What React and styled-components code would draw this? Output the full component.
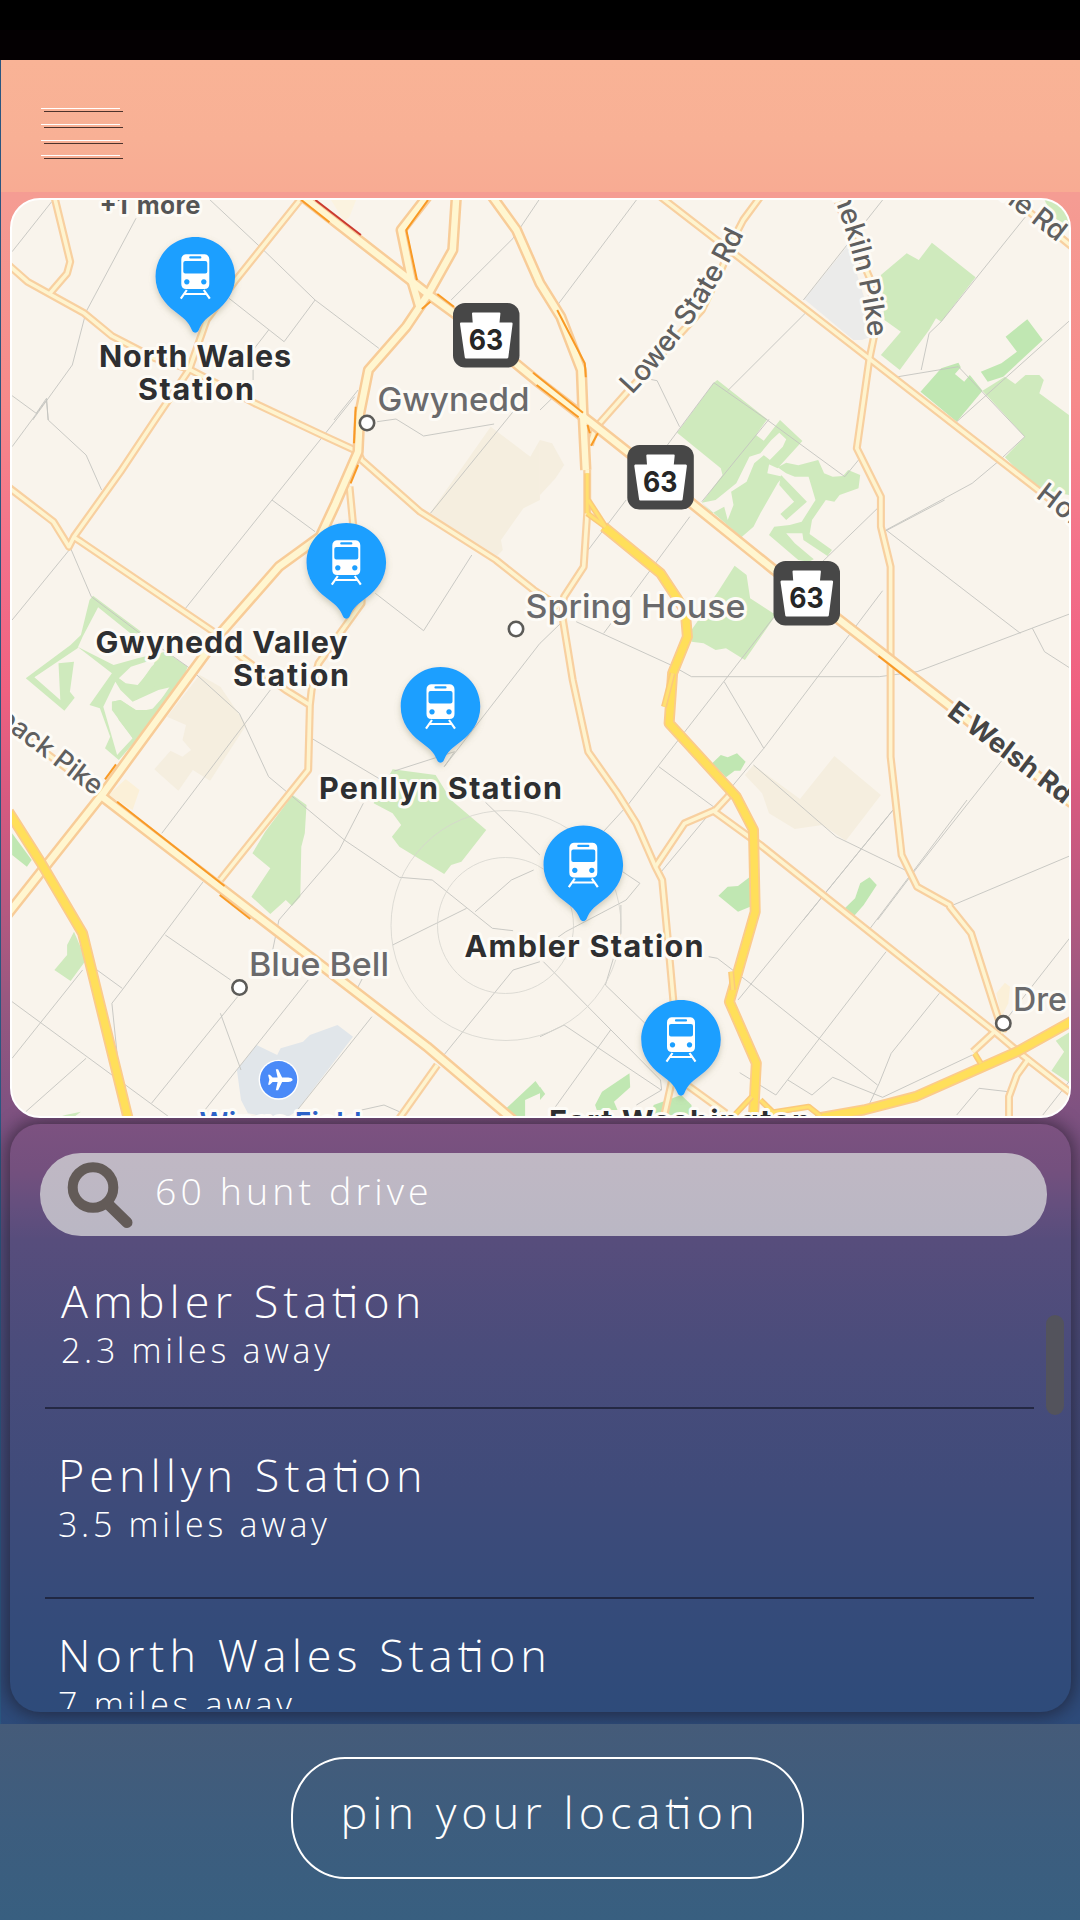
import React from "react";
import styled, { createGlobalStyle } from "styled-components";

const GlobalStyle = createGlobalStyle`
  * { box-sizing: border-box; }
  body { margin: 0; font-family: "Open Sans", "Lato", sans-serif; }
`;

/* ---------- layout ---------- */

const Page = styled.div`
  display: flex;
  flex-direction: column;
  width: 1080px;
  height: 1920px;
  overflow: hidden;
  background: linear-gradient(
    180deg,
    #f6a293 0,
    #f59c93 198px,
    #f68a8a 400px,
    #f3708a 560px,
    #ef6180 690px,
    #d65a80 800px,
    #b85980 900px,
    #985880 1000px,
    #7f5281 1110px,
    #74507e 1170px,
    #654f7e 1205px,
    #574d7c 1240px,
    #4a4c7b 1350px,
    #3f4b7a 1490px,
    #344b7a 1620px,
    #2e4b7a 1712px,
    #26517c 1920px
  );
`;

const StatusBar = styled.div`
  height: 60px;
  flex: none;
  background: linear-gradient(180deg, #000 30px, #040002 30px);
`;

const Body = styled.div`
  display: flex;
  flex-direction: column;
  flex: 1;
  border-left: 1px solid #2a5680;
`;

const Header = styled.header`
  display: flex;
  height: 132px;
  flex: none;
  padding: 48px 0 0 40px;
  background: linear-gradient(180deg, #f9b396, #f8b095 60%, #f8ab93);
`;

const MenuButton = styled.button`
  display: grid;
  grid-template-rows: 16px 16px 15px 1px;
  width: 79px;
  height: 48px;
  padding: 0;
  border: 0;
  background: none;
`;

const MenuLine = styled.span`
  height: 1px;
  background: #fff;
  box-shadow: 3px 3px 0 rgba(20, 10, 10, 0.75);
`;

const MapCard = styled.section`
  position: relative;
  z-index: 1;
  width: 1061px;
  height: 920px;
  flex: none;
  margin: 6px 0 6px 9px;
  border: 2px solid #fff;
  border-radius: 30px;
  overflow: hidden;
  background: #f9f4ec;
`;

const MapSvg = styled.svg`
  display: block;
  width: 1057px;
  height: 916px;
  font-family: "Inter", "Roboto", sans-serif;
`;

const Panel = styled.section`
  display: flex;
  flex-direction: column;
  width: 1061px;
  height: 588px;
  flex: none;
  margin-left: 9px;
  padding: 29px 0 3px;
  border-radius: 30px;
  box-shadow: 0 0 18px 3px rgba(25, 20, 30, 0.6);
`;

const SearchBar = styled.label`
  display: flex;
  align-items: center;
  width: 1007px;
  height: 83px;
  flex: none;
  margin-left: 30px;
  padding-left: 27px;
  border-radius: 41px;
  background: linear-gradient(180deg, #c0b8c4, #bab7c4);
`;

const SearchIcon = styled.svg`
  width: 68px;
  height: 68px;
  flex: none;
`;

const SearchText = styled.span`
  margin: -7px 0 0 20px;
  font-weight: 300;
  font-size: 37.500px;
  line-height: 46px;
  letter-spacing: 4.1px;
  color: #fff;
  white-space: pre;
`;

const Results = styled.div`
  display: flex;
  flex: 1;
  min-height: 0;
  overflow: hidden;
`;

const List = styled.ul`
  width: 1024px;
  margin: 0;
  padding: 0 0 0 35px;
  list-style: none;
`;

const Row = styled.li`
  height: ${(p) => p.$height}px;
  padding: ${(p) => p.$top}px 0 0 ${(p) => p.$left}px;
  border-bottom: 2px solid rgba(25, 28, 50, 0.75);
  color: #fff;
  font-weight: 300;
  white-space: pre;
`;

const Title = styled.div`
  font-size: 45px;
  line-height: 46px;
  letter-spacing: ${(p) => p.$spacing}px;
`;

const Distance = styled.div`
  margin-top: 6px;
  font-size: 34px;
  line-height: 40px;
  letter-spacing: ${(p) => p.$spacing}px;
`;

const ScrollThumb = styled.div`
  width: 18px;
  height: 100px;
  margin: 79px 0 0 12px;
  border-radius: 9px;
  background: #53535c;
`;

const Footer = styled.footer`
  display: flex;
  justify-content: flex-start;
  align-items: flex-start;
  flex: 1;
  margin: 12px 0 0 -1px;
  padding: 33px 0 0 291px;
  background: linear-gradient(180deg, #455b79, #3d5d7e 50%, #385f80);
`;

const PinButton = styled.button`
  width: 513px;
  height: 122px;
  padding: 0 0 12px 5px;
  border: 2px solid #fff;
  border-radius: 54px / 58px;
  background: none;
  color: #fff;
  font-family: inherit;
  font-weight: 300;
  font-size: 45px;
  line-height: 54px;
  letter-spacing: ${(p) => p.$spacing}px;
  white-space: pre;
`;

const JoinedT = styled.span`
  position: relative;
  letter-spacing: 1px;
  &::after {
    content: "";
    position: absolute;
    left: 0.2em;
    top: 0.54em;
    width: 0.26em;
    height: 2.5px;
    background: #fff;
  }
`;

/* Joins each "t" to the "i" after it, as a ti ligature. */
function Ligated({ children }) {
  const parts = children.split("ti");
  return parts.map((part, i) => (
    <React.Fragment key={i}>
      {i > 0 && (
        <>
          <JoinedT>t</JoinedT>i
        </>
      )}
      {part}
    </React.Fragment>
  ));
}

/* ---------- map data ---------- */

/* The map is surveyed in six overlapping sheets; a capital letter in a
   line switches to that sheet, and all sheets share one scale. */
const SHEETS = {
  A: [0, 0],
  B: [540, 180],
  C: [0, 400],
  D: [540, 500],
  E: [0, 740],
  F: [540, 800],
};

function points(text) {
  let origin = SHEETS.A;
  const out = [];
  for (const token of text.split(" ")) {
    if (SHEETS[token]) origin = SHEETS[token];
    else {
      const [x, y] = token.split(",").map(Number);
      out.push(`${(origin[0] + x / 2.904).toFixed(1)},${(origin[1] + y / 3).toFixed(1)}`);
    }
  }
  return out.join(" ");
}

const AREAS = [
  ["#cfeabd", "B 990,285 1065,220 1100,240 1138,188 1265,292 1165,425 1150,415 1130,450 1045,570 990,525 1048,455 1000,420"],
  ["#ebebea", "B 895,195 955,400 960,470 935,480 910,480 768,358"],
  ["#c0e7b2", "B 1352,470 1415,418 1460,480 1345,590 1300,605 1280,575 1340,550 1385,515"],
  ["#cfeabd", "B 1285,632 1350,590 1380,612 1410,585 1450,585 1463,600 1450,640 1536,705 1536,945 1440,925 1350,832 1408,770"],
  ["#c0e7b2", "B 1105,635 1165,565 1215,548 1222,562 1205,582 1232,605 1248,585 1285,632 1210,725"],
  ["#cfeabd", "B 1465,60 1540,60 1540,145 1490,110"],
  ["#cfeabd", "B 398,758 505,608 515,600 660,718 627,765 650,782 697,720 762,783 690,865 658,850 705,800 715,778 695,758 672,780 640,820 608,830 570,910 510,960 470,968 530,885 525,865"],
  ["#cfeabd", "B 470,968 500,1000 535,980 545,1020 562,975 555,935 600,905 622,850 650,826 668,840 660,880 705,890 690,910 640,1000 620,1040 585,1072"],
  ["#cfeabd", "B 690,862 715,848 750,856 808,840 825,880 850,890 880,888 895,870 930,885 925,925 870,945 855,965 830,960 790,1020 783,1062 848,1110 835,1128 765,1080 762,1060 715,1060 740,1090 795,1138 780,1145 750,1140 665,1065 680,1040 725,1035 760,1025 800,960 780,890 740,890 715,880"],
  ["#cfeabd", "B 700,885 775,965 715,1020 698,1002 738,965 695,915"],
  ["#cfeabd", "D 565,197 600,225 610,295 685,345 595,480 540,445 510,450 475,430 440,425 440,390 520,270"],
  ["#c0e7b2", "D 500,790 525,765 545,772 572,760 597,785 582,812 565,812 540,832"],
  ["#c0e7b2", "D 518,1187 545,1160 575,1158 610,1130 610,1220 575,1235"],
  ["#c0e7b2", "D 885,1225 915,1195 930,1150 957,1132 978,1155 940,1215 910,1250"],
  ["#cfeabd", "C 75,835 205,735 235,705 260,600 270,587 410,695 385,705 285,622 240,710 225,745 100,832 175,900 170,790 215,785 203,875 217,893 187,932"],
  ["#cfeabd", "C 225,740 330,795 400,775 480,755 545,800 530,840 430,980 345,1080 305,1045 320,1010 290,925 260,915 325,820"],
  ["#f9f4ec", "C 345,835 380,865 400,860 440,800 470,770 380,800"],
  ["#f9f4ec", "C 335,845 300,920 340,1065 385,1015 325,930 325,905 350,900 395,930 440,930 500,860 460,870 385,905 350,870"],
  ["#cfeabd", "C 325,905 350,900 400,935 450,925 500,850 520,860 390,1020 345,960"],
  ["#cfeabd", "C 345,835 395,900 450,860 485,770 455,765 445,800 400,855 365,850"],
  ["#cfeabd", "E 850,165 890,195 885,280 875,320 872,470 848,498 830,480 785,522 730,470 785,385 733,340 770,275"],
  ["#cfeabd", "E 1085,190 1140,88 1265,105 1310,180 1412,270 1340,365 1310,375 1290,402 1160,320 1138,290 1165,255 1140,220"],
  ["#c0e7b2", "E 35,280 92,360 78,380 35,345"],
  ["#cfeabd", "E 215,575 250,660 205,723 158,690 195,645 195,615"],
  ["#c0e7b2", "E 1465,1110 1555,1023 1570,1045 1568,1060 1525,1080 1525,1130 1480,1130"],
  ["#cfeabd", "E 165,1133 190,1125 235,1115 210,1135"],
  ["#c0e7b2", "F 160,915 180,875 260,820 262,862 215,905 225,930 165,930"],
  ["#c0e7b2", "F 330,915 410,885 440,915 440,945 325,945"],
  ["#cfeabd", "F 1498,722 1540,695 1540,850 1485,812 1522,755"],
  ["#c0e7b2", "F 0,860 15,882 0,900"],
  ["#f5eedf", "C 1425,80 1540,170 1568,120 1568,300 1520,325 1455,420 1460,450 1440,472 1245,345"],
  ["#f5eedf", "B 0,780 35,790 70,855 45,895 0,945"],
  ["#f5eedf", "C 580,825 640,860 715,975 610,1142 560,1110 518,1172 448,1108 495,1052 530,1070 555,1050 530,1020 540,975 485,950"],
  ["#fbf0d8", "C 365,1137 405,1170 385,1230 315,1185"],
  ["#f5eedf", "D 595,825 620,795 755,897 855,768 990,885 888,1022 820,975 740,987 665,940 645,880"],
  ["#fbf0d8", "F 1325,580 1350,548 1365,560 1360,610 1340,650"],
  ["#fbf3e0", "A 960,598 1035,598 1015,650 1000,665"],
  ["#e1e6ea", "E 688,990 745,915 805,945 815,925 880,905 900,885 980,855 1025,890 860,1115 820,1140 720,1120 700,1080"],
];

const LANES = [
  "A 35,755 150,605",
  "A 395,655 250,935 210,1095 95,1260",
  "A 600,590 770,755 915,900 1100,1045",
  "A 665,895 825,1025 915,900",
  "A 780,990 735,1050 C 735,-60",
  "A 1310,900 1490,715 1565,600",
  "A 35,1187 105,1240 135,1195 140,1260",
  "A 1040,1170 970,1260",
  "C 35,140 135,0 140,60 250,165 295,270",
  "C 35,660 205,445 265,590 400,695 545,800 695,940 780,1130 1000,1320 1160,1432 1255,1440 1430,1585 1490,1592",
  "C 1030,-10 790,300 535,630",
  "C 790,300 915,395",
  "C 1090,580 1230,692 1370,465",
  "C 1095,65 1150,57 1230,108 1435,72",
  "C 1490,35 1250,340",
  "C 1568,730 1290,1100 1320,1055 1145,1113",
  "C 905,1015 1140,1160",
  "C 785,870 470,1300",
  "B 280,60 40,390",
  "B 0,690 50,640",
  "B 995,60 765,360",
  "B 770,400 545,632",
  "B 1410,110 1165,425 1130,460 1107,570",
  "B 1040,590 1215,560 1408,770 1330,845 1255,910 1005,1050 1395,1360",
  "B 1540,420 1210,725",
  "B 320,598 340,602 405,740",
  "B 370,795 505,608 660,720 885,890 925,840",
  "B 665,718 470,965",
  "B 250,960 140,1110",
  "B 435,1010 185,1360",
  "B 980,985 820,1145",
  "D 105,365 380,495 440,530 985,530 1095,515 1540,341",
  "D 680,350 255,915 100,1090",
  "D 535,545 650,745",
  "D 995,272 650,745 340,1130",
  "D 1175,0 1005,92",
  "D 1430,385 1465,455 1540,505",
  "D 1350,770 1090,1110 980,1260",
  "D 345,800 510,925",
  "D 620,795 860,1010 1060,1110",
  "D 1025,930 765,1260",
  "D 1200,1215 1540,1067",
  "D 0,430 60,370",
  "E 1055,190 985,330 810,540 790,640",
  "E 1380,515 1485,420 1550,390",
  "E 1140,615 1355,505",
  "E 1410,187 1568,345",
  "E 590,425 355,750 325,790 350,1040",
  "E 480,585 670,720",
  "E 690,770 440,1090",
  "E 640,820 700,990",
  "E 895,720 595,1110",
  "E 35,785 490,1130",
  "E 35,955 240,690",
  "E 250,955 75,1115",
  "E 275,685 355,745",
  "E 1080,830 860,1115",
  "E 1035,750 1055,710",
  "E 1285,950 1490,690 1568,665",
  "E 1050,1110 1115,1095 1160,1115",
  "F 240,215 290,250 250,300 75,395 0,450",
  "F 10,485 350,840 353,870 280,915",
  "F 490,470 515,475 610,550 980,855",
  "F 235,315 235,400 190,555 340,705 420,800",
  "F 205,690 45,920",
  "F 0,710 70,675 352,870",
  "F 1025,30 575,600",
  "F 1240,0 955,390",
  "F 1005,455 685,885 580,818",
  "F 1160,580 1020,760 985,850 955,915",
  "F 720,840 790,885 850,832 995,892 1255,765",
  "F 1540,412 1360,650",
  "F 1210,945 1275,865 1360,875",
  "F 1540,840 1460,945",
];

/* fill, casing, fill width, casing width */
const ROAD = {
  small: ["#fef4cf", "#f8d0a0", 3.6, 8],
  main: ["#fff6d0", "#f8cc98", 6.4, 11.4],
  high: ["#ffdf5a", "#fbcb8c", 7.4, 11],
  thin: ["#ffe070", "#fbc97c", 3, 6],
};

const ROADS = [
  ["small", "A 158,590 204,785 195,820 145,880"],
  ["small", "A 25,795 80,845 245,940 325,1008 450,1075 550,1108 740,1210 C 935,105 1040,155 1050,180 1220,335 1440,480 1550,570 D 55,320"],
  ["small", "A 875,595 685,840 600,960 550,1108 450,1260 C 350,215 215,410 200,440 155,365 25,262"],
  ["small", "C 212,410 235,425 620,695 700,770 830,870 900,915"],
  ["small", "C 1015,260 1025,370 1050,560 1050,610 925,790 905,870 900,915 895,1110 E 640,420"],
  ["small", "B 640,50 590,120 560,180 530,260 470,390 390,480 250,640 160,745 145,795"],
  ["small", "B 350,50 525,190 955,535 1440,925 1545,1010"],
  ["small", "B 855,40 900,160 960,300 972,460 957,535 920,805 990,950 990,1040 1018,1160 D 1018,205 1018,770 1050,1065 1095,1160 1190,1215 F 1190,320 1252,400 1320,620 1345,700"],
  ["small", "B 1380,60 1420,95 1545,200"],
  ["small", "B 137,870 137,1000 127,1160 70,1250 D 65,350 95,540 140,755 225,880 280,970 335,1100 355,1140 F 375,460 387,600 388,820 360,950"],
  ["small", "D 555,880 510,930 420,970 335,1100"],
  ["small", "F 500,30 640,135 1320,695 1400,765 1545,882"],
  ["small", "F 1320,695 1257,755"],
  ["small", "F 1420,775 1385,825 1362,890 1362,950"],
  ["small", "F 420,850 540,940"],
  ["small", "C 25,975 290,1180"],
  ["small", "E 1270,975 1160,1135"],
  ["main", "A 1325,590 1315,750 1245,880 1180,980 1070,1110 1045,1240 C 1040,155 975,310 930,410 810,500 640,700 470,940 300,1180 E 20,525"],
  ["main", "A 1240,590 1165,690 1195,840 1218,920"],
  ["main", "A 880,590 1240,880 1320,940 1568,1150 B 150,730 260,820 440,970 680,1170 D 870,360 1180,610 1545,910"],
  ["main", "A 1430,590 1500,690 1568,850 B 60,410 120,570 125,700 133,870"],
  ["main", "E 290,165 1240,920 1490,1140"],
  ["thin", "B 137,880 137,1000"],
  ["thin", "B 140,960 190,1040"],
  ["thin", "B 137,1000 190,1040"],
  ["thin", "D 385,520 360,620"],
  ["thin", "F 1262,760 1280,790"],
  ["thin", "F 555,515 560,570"],
  ["thin", "F 660,940 780,920 815,948"],
  ["thin", "F 615,890 565,945"],
  ["thin", "F 640,900 690,950"],
  ["high", "D 185,80 350,220 395,290 422,335 428,410 385,520 375,670 570,890 620,990 F 625,335 550,605 628,790 620,950"],
  ["high", "F 800,955 940,930 1090,890 1385,755 1545,663"],
  ["high", "E 25,215 120,370 240,580 372,1135"],
];

const TRAFFIC = [
  ["#f99a25", "A 875,600 957,667"],
  ["#cb3b30", "A 916,600 1048,705"],
  ["#f99a25", "A 1243,600 1180,690 1211,840"],
  ["#f99a25", "A 1225,927 1250,905"],
  ["#f99a25", "A 1270,882 1318,920"],
  ["#f99a25", "B 50,390 130,550 133,592"],
  ["#f99a25", "B -20,578 125,698"],
  ["#f99a25", "B -10,615 112,712"],
  ["#f99a25", "B 138,735 145,760"],
  ["#f99a25", "B 168,760 148,797"],
  ["#f99a25", "C 1033,20 1028,130"],
  ["#f99a25", "C 1040,195 1018,250"],
  ["#f99a25", "E 305,118 337,73"],
  ["#f99a25", "E 340,185 652,438"],
  ["#f99a25", "E 638,465 727,537"],
  ["#f99a25", "D 983,468 1075,542"],
];

/* x, y of the baseline, width, size, text */
const STATION_LABELS = [
  [99, 366.5, 192, 30.5, "North Wales"],
  [138, 399.5, 116, 30.5, "Station"],
  [95.5, 653.3, 252, 30.5, "Gwynedd Valley"],
  [233, 686, 116, 30.5, "Station"],
  [319, 798.5, 243, 30.5, "Penllyn Station"],
  [464.5, 957.3, 239, 30.5, "Ambler Station"],
  [549, 1131.5, 262, 30.5, "Fort Washington"],
];

const TOWN_LABELS = [
  [377.5, 411, 152, 33, "Gwynedd"],
  [525.5, 617.5, 220, 33, "Spring House"],
  [249, 976, 140, 33, "Blue Bell"],
  [1013, 1011, 54, 33, "Dre"],
];

const TOWN_DOTS = [[367, 423], [516, 629], [239.5, 987.5], [1003.3, 1023.3]];
const SHIELDS = [[453, 303], [627.3, 445], [773.5, 561]];
const PINS = [[195.3, 237], [346.3, 523], [440.5, 667], [583.3, 825.5], [681, 1000]];

const ROAD_LABELS = [
  ["lower-state", "M632,395 Q702,322 746,230", "Lower State Rd", 28, 197],
  ["limekiln", "M833,195 Q859,262 868.5,338", "nekiln Pike", 28, 147],
  ["top-right", "M999,197 L1090,268", "ne Rd", 28, 74],
  ["horsham", "M1035,497 L1150,585", "Horsham", 28, 126],
  ["skippack", "M-4,721 L101,801", "pack Pike", 27, 124],
];

const Label = styled.text`
  paint-order: stroke;
  stroke: #fdfbf6;
  stroke-width: 6px;
  stroke-linejoin: round;
  fill: ${(p) => p.$color};
  font-weight: ${(p) => p.$weight};
`;

function Shield({ x, y }) {
  return (
    <g transform={`translate(${x} ${y})`}>
      <rect width="66.5" height="64.5" rx="12" fill="#474747" />
      <path
        d="M20,9.5H46.500Q47.500,9.500 47.400,10.500L46.500,19.500H58.500Q59.800,19.500 59.600,21L55.300,54.500Q55,55.500 54,55.500H13Q12,55.500 11.800,54.500L7,21Q6.900,19.500 8,19.500H19.700L19,10.500Q19,9.500 20,9.500Z"
        fill="#fff"
      />
      <text x="33" y="46.500" fontSize="28.500" fontWeight="650" fill="#262626" textAnchor="middle" textLength="34.500" lengthAdjust="spacingAndGlyphs">
        63
      </text>
    </g>
  );
}

function StationPin({ x, y }) {
  return (
    <g transform={`translate(${x} ${y})`}>
      <path
        d="M0,0C22,0 39.800,17.500 39.800,39.500C39.800,56 30,67 21,74C12,81 7,84 3.500,93C2,96.500 -2,96.500 -3.500,93C-7,84 -12,81 -21,74C-30,67 -39.800,56 -39.800,39.500C-39.800,17.500 -22,0 0,0Z"
        fill="#1f9fff"
        filter="url(#pin-shadow)"
      />
      <path
        fill="#fff"
        fillRule="evenodd"
        d="M-9.500,17.300H9.500Q14,18 14,22.500V47Q14,52 9,52H-9Q-14,52 -14,47V22.500Q-14,18 -9.500,17.300ZM-5,19.300A1,1 0 0 0 -5,21.500H5A1,1 0 0 0 5,19.300ZM-10,24Q-12,24 -12,26V34.500Q-12,36.500 -10,36.500H10Q12,36.500 12,34.500V26Q12,24 10,24ZM-8.500,42.200a2.700,2.700 0 1 0 .01,0ZM8.500,42.200a2.700,2.700 0 1 0 .01,0Z"
      />
      <path d="M-8.500,53L-14.500,61.700M8.500,53L14.500,61.700M-10.500,57H10.500" stroke="#fff" strokeWidth="2.200" fill="none" />
    </g>
  );
}

function TransitMap() {
  return (
    <MapSvg viewBox="12 200 1057 916">
      <defs>
        <filter id="pin-shadow" x="-30%" y="-30%" width="160%" height="160%">
          <feDropShadow dx="0" dy="3" stdDeviation="3" floodColor="#886" floodOpacity="0.4" />
        </filter>
        {ROAD_LABELS.map(([id, d]) => (
          <path key={id} id={id} d={d} />
        ))}
      </defs>
      {AREAS.map(([fill, line], i) => (
        <polygon key={i} points={points(line)} fill={fill} />
      ))}
      <g fill="none" stroke="#c4c4c0" strokeWidth="0.9">
        {LANES.map((line) => (
          <polyline key={line} points={points(line)} />
        ))}
        <g stroke="#d6d4ce" strokeWidth="0.8">
          <circle cx="506" cy="925.500" r="115" />
          <circle cx="505.500" cy="925.500" r="68" />
        </g>
      </g>
      {Object.keys(ROAD).map((kind) => {
        const [fill, casing, inner, outer] = ROAD[kind];
        const lines = ROADS.filter(([k]) => k === kind).map(([, line]) => points(line));
        return (
          <g key={kind} fill="none" strokeLinejoin="round">
            {lines.map((p, i) => (
              <polyline key={`c${i}`} points={p} stroke={casing} strokeWidth={outer} />
            ))}
            {lines.map((p, i) => (
              <polyline key={`f${i}`} points={p} stroke={fill} strokeWidth={inner} />
            ))}
          </g>
        );
      })}
      {TRAFFIC.map(([color, line]) => (
        <polyline key={line} points={points(line)} fill="none" stroke={color} strokeWidth="2" />
      ))}

      {TOWN_DOTS.map(([x, y]) => (
        <circle key={x} cx={x} cy={y} r="7.200" fill="#fff" stroke="#5c5b58" strokeWidth="2.600" />
      ))}

      {ROAD_LABELS.map(([id, , text, size, length]) => (
        <Label key={id} $color="#5f5f5f" $weight={500} fontSize={size}>
          <textPath href={`#${id}`} textLength={length}>
            {text}
          </textPath>
        </Label>
      ))}
      <Label $color="#454545" $weight={650} fontSize="27" transform="translate(946 715) rotate(37.300)" textLength="148" lengthAdjust="spacingAndGlyphs">
        E Welsh Rd
      </Label>

      {TOWN_LABELS.map(([x, y, width, size, text]) => (
        <Label key={text} $color="#6a6a6c" $weight={550} x={x} y={y} fontSize={size} textLength={width} lengthAdjust="spacingAndGlyphs">
          {text}
        </Label>
      ))}
      <Label $color="#555" $weight={650} x="99.500" y="214" fontSize="25.500" wordSpacing="3" textLength="101">
        +1 more
      </Label>
      <Label $color="#2b62c8" $weight={600} x="199.500" y="1132.500" fontSize="28.500" textLength="162">
        Wings Field
      </Label>

      <circle cx="278.600" cy="1079.700" r="20" fill="#fff" />
      <circle cx="278.600" cy="1079.700" r="18.600" fill="#4a8af8" />
      <path
        transform="translate(278.600 1079.700)"
        fill="#fff"
        d="M14,0C14,1.500 11,2.200 9,2.200H3.500L-.5,10.500H-2.800L-1,2.200H-6L-8.800,5H-10.500L-9.300,0L-10.500,-5H-8.800L-6,-2.200H-1L-2.800,-10.500H-.5L3.500,-2.200H9C11,-2.200 14,-1.500 14,0Z"
      />

      {SHIELDS.map(([x, y]) => (
        <Shield key={x} x={x} y={y} />
      ))}
      {STATION_LABELS.map(([x, y, width, size, text], i) => (
        <Label key={i} $color="#2e2f31" $weight={650} x={x} y={y} fontSize={size} textLength={width}>
          {text}
        </Label>
      ))}
      {PINS.map(([x, y]) => (
        <StationPin key={x} x={x} y={y} />
      ))}
    </MapSvg>
  );
}

/* ---------- page ---------- */

const STATIONS = [
  { name: "Ambler Station", distance: "2.3 miles away", height: 173, top: 42, left: 16, spacing: 5, small: 3.7 },
  { name: "Penllyn Station", distance: "3.5 miles away", height: 190, top: 43, left: 13, spacing: 5, small: 3.7 },
  { name: "North Wales Station", distance: "7 miles away", height: 190, top: 33, left: 13, spacing: 5, small: 3.7 },
];

export default function App() {
  return (
    <Page>
      <GlobalStyle />
      <StatusBar />
      <Body>
        <Header>
          <MenuButton aria-label="Menu">
            <MenuLine />
            <MenuLine />
            <MenuLine />
            <MenuLine />
          </MenuButton>
        </Header>
        <MapCard>
          <TransitMap />
        </MapCard>
        <Panel>
          <SearchBar>
            <SearchIcon viewBox="0 0 68 68" fill="none" stroke="#635b58">
              <circle cx="26" cy="26.500" r="20.300" strokeWidth="10" />
              <path d="M40,42L60,61.500" strokeWidth="11" strokeLinecap="round" />
            </SearchIcon>
            <SearchText>60 hunt drive</SearchText>
          </SearchBar>
          <Results>
            <List>
              {STATIONS.map((s) => (
                <Row key={s.name} $height={s.height} $top={s.top} $left={s.left}>
                  <Title $spacing={s.spacing}>
                    <Ligated>{s.name}</Ligated>
                  </Title>
                  <Distance $spacing={s.small}>{s.distance}</Distance>
                </Row>
              ))}
            </List>
            <ScrollThumb />
          </Results>
        </Panel>
        <Footer>
          <PinButton $spacing={5}>
            <Ligated>pin your location</Ligated>
          </PinButton>
        </Footer>
      </Body>
    </Page>
  );
}
